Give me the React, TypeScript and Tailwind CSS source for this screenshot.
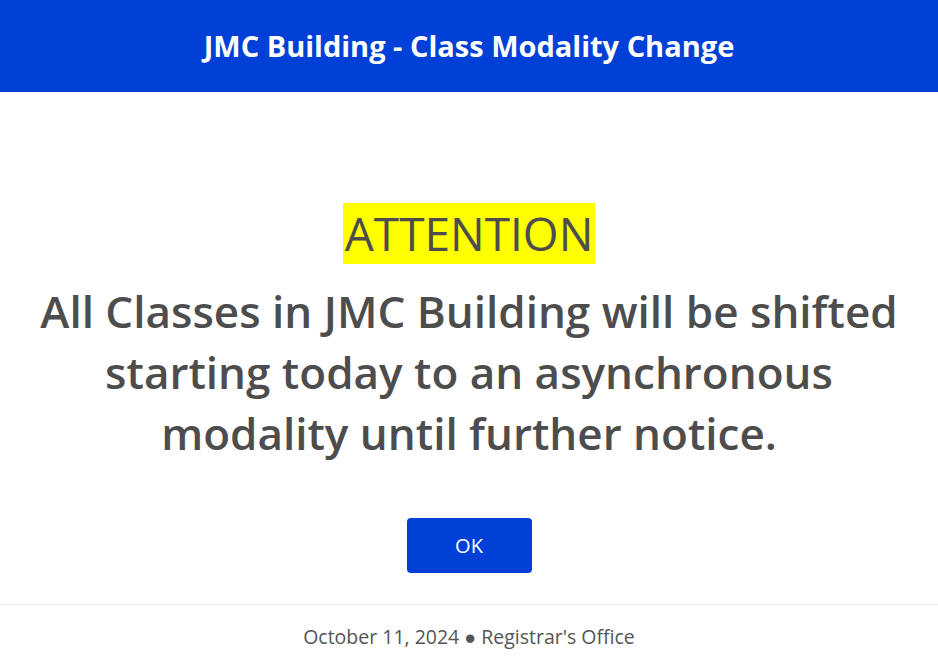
export default function App() {
  return (
    <div className="w-[938px] h-[665px] bg-white flex flex-col font-['Open_Sans',sans-serif]">
      <div className="h-[92px] bg-[#0040d6] flex items-center justify-center">
        <h1 className="text-white text-[29px] font-bold">JMC Building - Class Modality Change</h1>
      </div>
      <div className="flex-1 flex flex-col items-center pt-[111px]">
        <div className="bg-[#ffff00] text-[#4d4d4d] text-[46px] font-medium leading-[61px] px-[2px]">ATTENTION</div>
        <p className="mt-[17px] text-[#4d4d4d] text-[44px] font-semibold leading-[61px] text-center">
          All Classes in JMC Building will be shifted
          <br />
          starting today to an asynchronous
          <br />
          modality until further notice.
        </p>
        <button className="mt-[54px] w-[125px] h-[55px] rounded-[4px] bg-[#0040d6] text-white text-[20px]">OK</button>
      </div>
      <div className="border-t border-[#e8e8e8] h-[61px] flex items-center justify-center pt-[4px] text-[#555] text-[19.5px]">
        October 11, 2024 ● Registrar's Office
      </div>
    </div>
  );
}
